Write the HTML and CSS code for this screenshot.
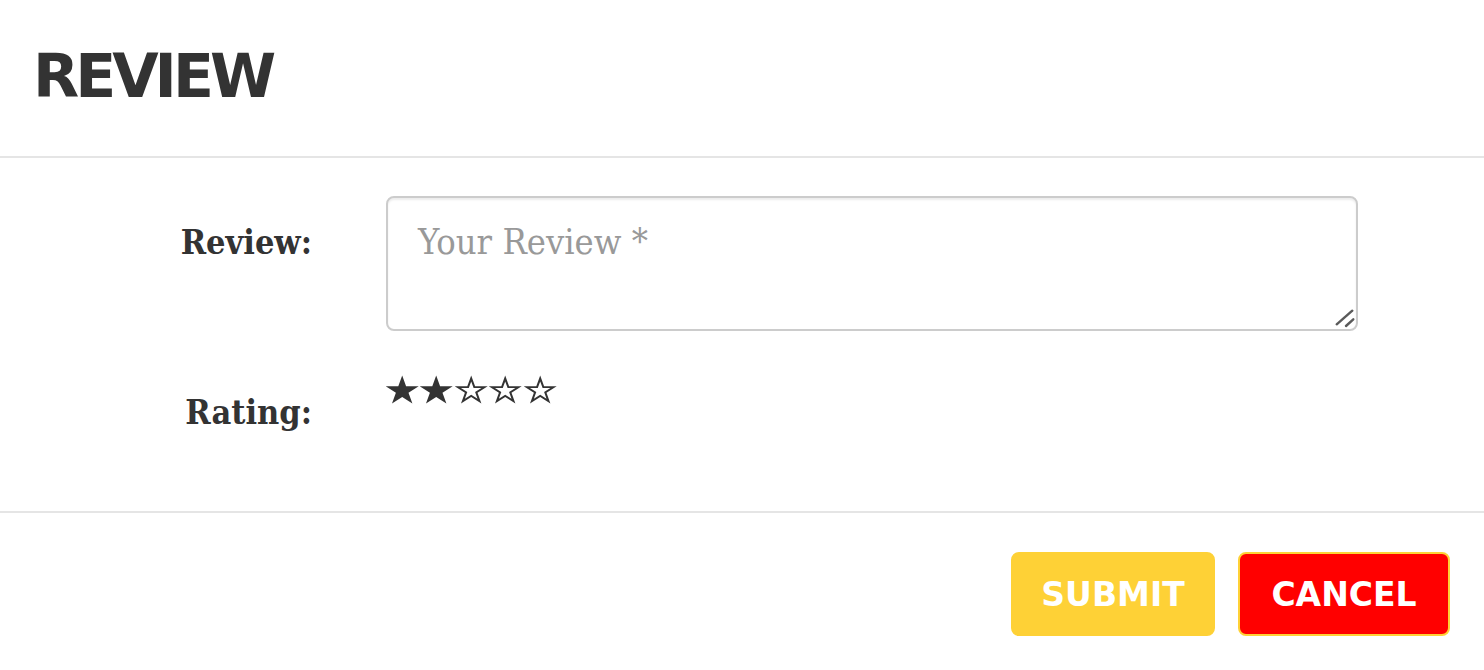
FILE: index.html
```html
<!DOCTYPE html>
<html lang="en">
<head>
<meta charset="utf-8">
<title>Review</title>
<link rel="stylesheet" href="styles.css">
</head>
<body>
<div class="modal">
  <header class="modal-header">
    <h4 class="modal-title">REVIEW</h4>
  </header>
  <form class="modal-body">
    <div class="form-row">
      <label class="form-label label-review" for="review">Review:</label>
      <div class="field">
        <textarea id="review" class="form-control" placeholder="Your Review *"></textarea>
        <svg class="grip" width="24" height="24" viewBox="0 0 24 24" aria-hidden="true">
          <line x1="4.7" y1="19.3" x2="20.3" y2="5.7"/>
          <line x1="14" y1="21" x2="21.3" y2="14.3"/>
        </svg>
      </div>
    </div>
    <div class="form-row rating-row">
      <label class="form-label label-rating">Rating:</label>
      <div class="stars">
        <svg class="star" width="34.4" height="29" viewBox="0 0 34 29"><path d="M17,0.5 L20.9,11.2 L33.5,11.2 L23.3,17.8 L27.2,28.5 L17,21.9 L6.8,28.5 L10.7,17.8 L0.5,11.2 L13.1,11.2 Z"/></svg>
        <svg class="star" width="34.4" height="29" viewBox="0 0 34 29"><path d="M17,0.5 L20.9,11.2 L33.5,11.2 L23.3,17.8 L27.2,28.5 L17,21.9 L6.8,28.5 L10.7,17.8 L0.5,11.2 L13.1,11.2 Z"/></svg>
        <svg class="star" width="34.4" height="29" viewBox="0 0 34 29"><path d="M17,0.5 L20.9,11.2 L33.5,11.2 L23.3,17.8 L27.2,28.5 L17,21.9 L6.8,28.5 L10.7,17.8 L0.5,11.2 L13.1,11.2 Z M17,6.38 L19.41,13.01 L27.24,13.01 L20.9,17.11 L23.33,23.75 L17,19.65 L10.67,23.75 L13.1,17.11 L6.76,13.01 L14.59,13.01 Z"/></svg>
        <svg class="star" width="34.4" height="29" viewBox="0 0 34 29"><path d="M17,0.5 L20.9,11.2 L33.5,11.2 L23.3,17.8 L27.2,28.5 L17,21.9 L6.8,28.5 L10.7,17.8 L0.5,11.2 L13.1,11.2 Z M17,6.38 L19.41,13.01 L27.24,13.01 L20.9,17.11 L23.33,23.75 L17,19.65 L10.67,23.75 L13.1,17.11 L6.76,13.01 L14.59,13.01 Z"/></svg>
        <svg class="star" width="34.4" height="29" viewBox="0 0 34 29"><path d="M17,0.5 L20.9,11.2 L33.5,11.2 L23.3,17.8 L27.2,28.5 L17,21.9 L6.8,28.5 L10.7,17.8 L0.5,11.2 L13.1,11.2 Z M17,6.38 L19.41,13.01 L27.24,13.01 L20.9,17.11 L23.33,23.75 L17,19.65 L10.67,23.75 L13.1,17.11 L6.76,13.01 L14.59,13.01 Z"/></svg>
      </div>
    </div>
  </form>
  <footer class="modal-footer">
    <button type="button" class="btn btn-submit">SUBMIT</button>
    <button type="button" class="btn btn-cancel">CANCEL</button>
  </footer>
</div>
</body>
</html>
```
FILE: styles.css
```css
* {
  box-sizing: border-box;
}

html, body {
  margin: 0;
  padding: 0;
  background: #fff;
}

body {
  font-family: "DejaVu Sans", sans-serif;
  color: #333;
}

.modal {
  width: 1484px;
  height: 670px;
  background: #fff;
}

.modal-header {
  padding: 43px 33px 47px;
  border-bottom: 2px solid #e5e5e5;
}

.modal-title {
  margin: 0;
  font-family: "DejaVu Sans", sans-serif;
  font-weight: 700;
  font-size: 60px;
  line-height: 66px;
  letter-spacing: -4px;
  color: #333;
}

.modal-body {
  margin: 0;
  padding: 38px 126px 79px 0;
  border-bottom: 2px solid #e5e5e5;
}

.form-row {
  display: grid;
  grid-template-columns: 312px 1fr;
  column-gap: 74px;
}

.rating-row {
  margin-top: 44px;
}

.form-label {
  text-align: right;
  font-family: "DejaVu Serif Condensed", "DejaVu Serif", serif;
  font-stretch: condensed;
  font-weight: 700;
  font-size: 34px;
  line-height: 40px;
  color: #333;
}

.label-review {
  padding-top: 26px;
}

.label-rating {
  padding-top: 17px;
}

.field {
  position: relative;
}

.form-control {
  display: block;
  width: 100%;
  height: 135px;
  margin: 0;
  padding: 19px 30px;
  border: 2px solid #ccc;
  border-radius: 8px;
  box-shadow: inset 0 2px 2px rgba(0, 0, 0, 0.075);
  font-family: "DejaVu Serif Condensed", "DejaVu Serif", serif;
  font-stretch: condensed;
  font-size: 36px;
  line-height: 50px;
  color: #555;
  resize: none;
  outline: none;
  background: #fff;
}

.form-control::placeholder {
  color: #999;
  opacity: 1;
}

.grip {
  position: absolute;
  right: 2px;
  bottom: 2px;
  stroke: #5a5a5a;
  stroke-width: 2.4;
  stroke-linecap: round;
}

.stars {
  display: flex;
  align-items: flex-start;
  margin-left: -1px;
}

.star {
  display: block;
}

.star path {
  fill: #333;
  fill-rule: evenodd;
}

.modal-footer {
  display: flex;
  justify-content: flex-end;
  gap: 23px;
  padding: 39px 34px 0 0;
}

.btn {
  display: flex;
  align-items: center;
  justify-content: center;
  height: 84px;
  padding: 0;
  border: 2px solid #fed136;
  border-radius: 8px;
  font-family: "DejaVu Sans", sans-serif;
  font-weight: 700;
  font-size: 33px;
  line-height: 1;
  color: #fff;
  cursor: pointer;
}

.btn-submit {
  width: 204px;
  background: #fed136;
}

.btn-cancel {
  width: 212px;
  background: #ff0000;
}
```
